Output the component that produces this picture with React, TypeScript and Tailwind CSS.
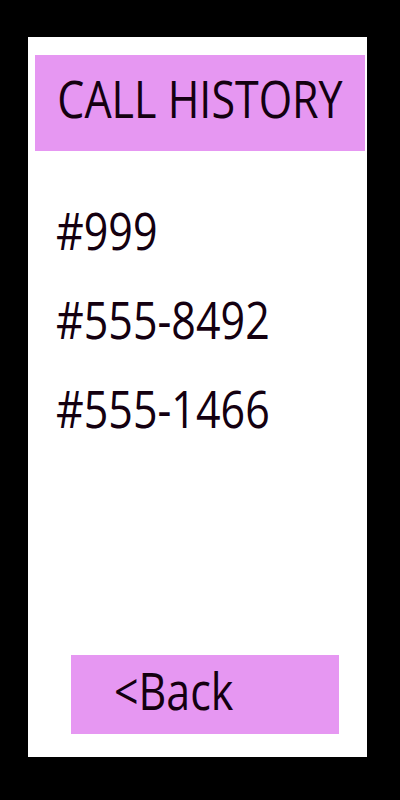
import React from 'react'

const calls = ['#999', '#555-8492', '#555-1466']

export default function App() {
  return (
    <div className="w-[400px] h-[800px] bg-black pt-[37px] pl-[28px]" style={{ fontFamily: '"Open Sans", "Noto Sans", sans-serif' }}>
      <div className="w-[339px] h-[720px] bg-white flex flex-col pt-[18px]">
        <div className="ml-[7px] mr-[2px] h-[96px] bg-[#e697f2] flex items-center justify-center pb-[10px]">
          <h1 className="inline-block scale-y-[1.2] text-[43px] leading-none text-[#140010]">CALL HISTORY</h1>
        </div>
        <ul className="mt-[35px] pl-[28px] flex flex-col">
          {calls.map((c) => (
            <li key={c} className="h-[89px] flex items-center">
              <span className="inline-block scale-y-[1.2] text-[43px] leading-none text-[#140010]">{c}</span>
            </li>
          ))}
        </ul>
        <button className="mt-auto mb-[23px] ml-[43px] w-[268px] h-[79px] bg-[#e697f2] flex items-center pl-[43px] pb-[8px]">
          <span className="inline-block scale-y-[1.2] text-[43px] leading-none text-[#140010]">&lt;Back</span>
        </button>
      </div>
    </div>
  )
}
